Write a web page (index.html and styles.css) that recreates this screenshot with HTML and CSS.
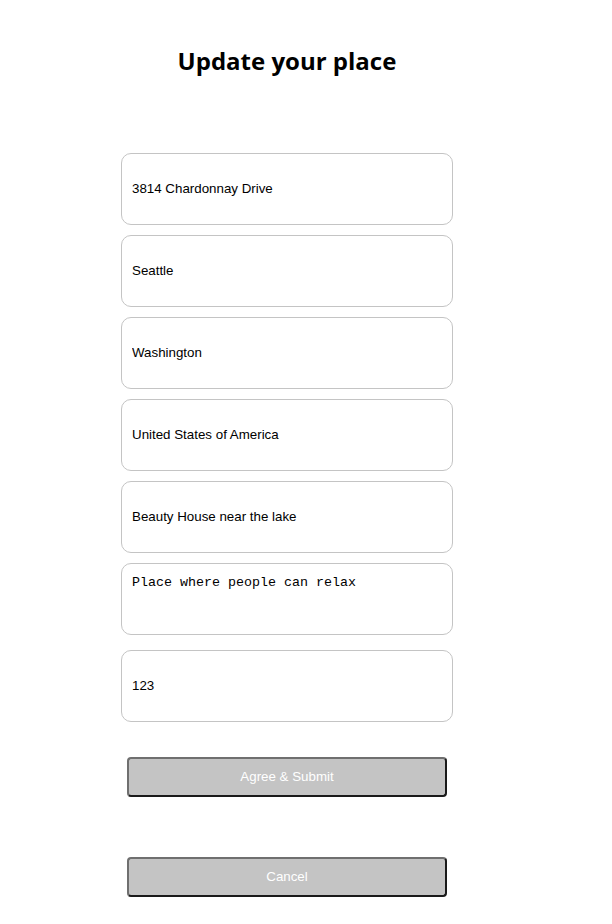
FILE: index.html
```html
<!DOCTYPE html>
<html>
<head>
<meta charset="utf-8">
<title>Update your place</title>
<link rel="stylesheet" href="styles.css">
</head>
<body>
<div class="page">
  <h1 class="title">Update your place</h1>
  <form class="form">
    <input class="field" type="text" value="3814 Chardonnay Drive">
    <input class="field" type="text" value="Seattle">
    <input class="field" type="text" value="Washington">
    <input class="field" type="text" value="United States of America">
    <input class="field" type="text" value="Beauty House near the lake">
    <textarea class="field area">Place where people can relax</textarea>
    <input class="field" type="text" value="123">
    <button class="btn submit" type="button">Agree &amp; Submit</button>
    <button class="btn cancel" type="button">Cancel</button>
  </form>
</div>
</body>
</html>
```

FILE: styles.css
```css
html, body {
  margin: 0;
  padding: 0;
  background: #ffffff;
}

.page {
  width: 574px;
  display: flex;
  flex-direction: column;
  align-items: center;
}

.title {
  margin: 43px 0 0 0;
  font-family: "Open Sans", sans-serif;
  font-weight: 700;
  font-size: 24px;
  line-height: 35px;
  color: #000;
}

.form {
  margin-top: 75px;
  display: flex;
  flex-direction: column;
  align-items: center;
}

.field {
  box-sizing: border-box;
  width: 332px;
  height: 72px;
  margin: 0 0 10px 0;
  padding: 0 10px 2px 10px;
  border: 1px solid #c4c4c4;
  border-radius: 10px;
  background: #fff;
  font-family: "Liberation Sans", Arial, sans-serif;
  font-size: 13.33px;
  color: #000;
  outline: none;
}

.area {
  display: block;
  padding: 11px 10px;
  font-family: "Liberation Mono", "Courier New", monospace;
  font-size: 13.33px;
  resize: none;
  margin-bottom: 15px;
}

.btn {
  box-sizing: border-box;
  width: 320px;
  height: 40px;
  background: #c4c4c4;
  color: #ffffff;
  font-family: "Liberation Sans", Arial, sans-serif;
  font-size: 13.33px;
  border: 2px solid;
  border-color: #6f6f6f #1a1a1a #1a1a1a #6f6f6f;
  border-radius: 4px;
  padding: 0 0 2px 0;
}

.submit {
  margin-top: 25px;
}

.cancel {
  margin-top: 60px;
}
```
